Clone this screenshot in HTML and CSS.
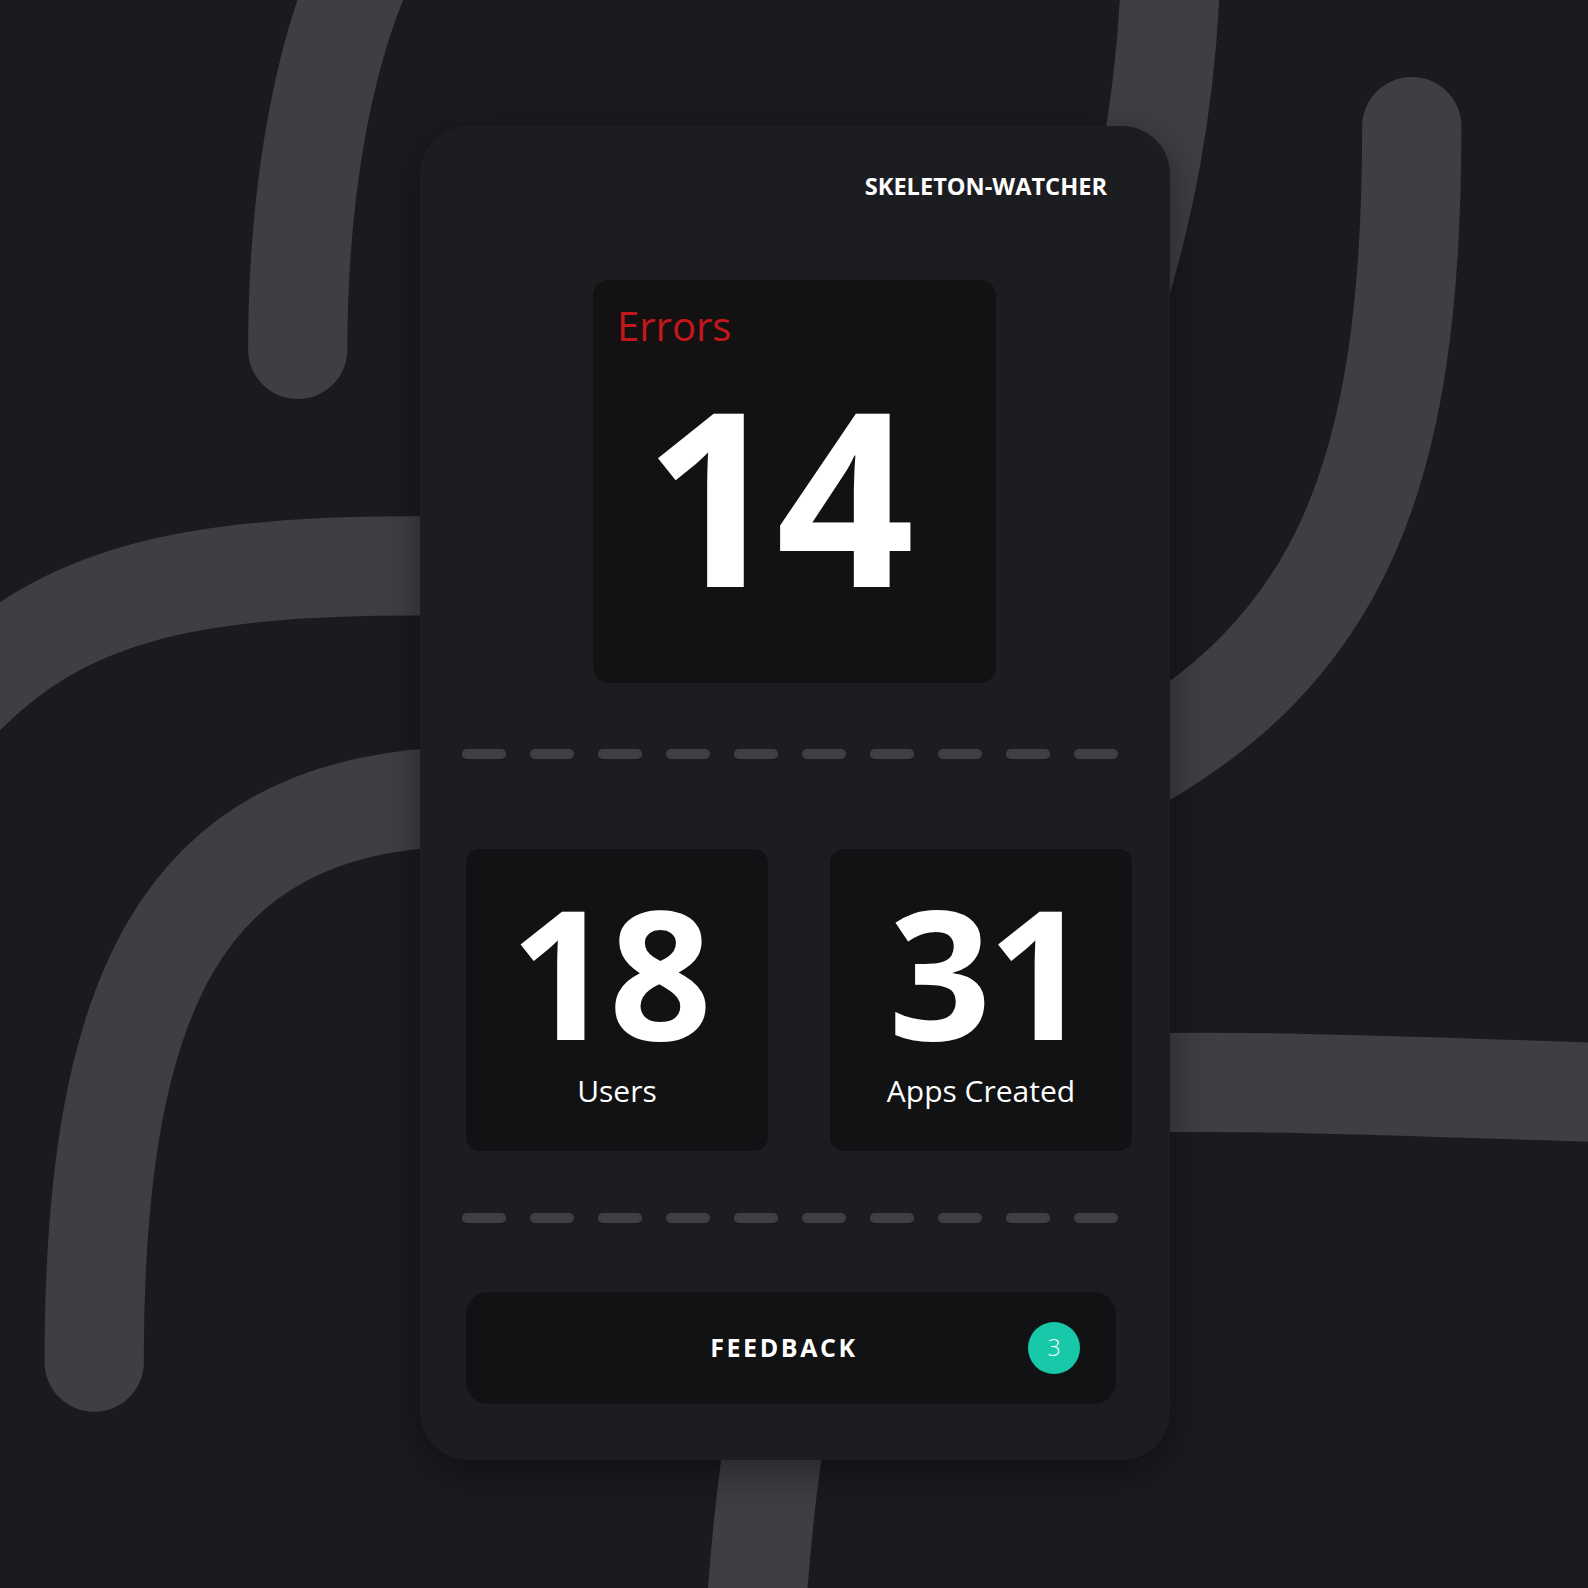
FILE: index.html
```html
<!DOCTYPE html>
<html lang="en">
<head>
    <meta charset="UTF-8">
    <meta name="viewport" content="width=device-width, initial-scale=1.0">
    <title>Skeleton Watcher</title>
    <link rel="stylesheet" href="styles.css">
</head>
<body>
    <!-- decorative strokes behind the phone card -->
    <svg class="backdrop" viewBox="0 0 1568 1568" aria-hidden="true">
        <g fill="none" stroke="#3e3f44" stroke-width="98" stroke-linecap="round">
            <path d="M362 -40 C316 60 294 200 294 345" />
            <path d="M1156 -30 C1152 100 1130 215 1090 335 L1000 520" />
            <path d="M1394 125 C1394 470 1325 645 1100 765" />
            <path d="M-40 692 C60 588 180 556 440 559" />
            <path d="M93 1345 C93 980 180 800 440 787" />
            <path d="M1100 1070 C1250 1066 1400 1073 1620 1080" />
            <path d="M770 1380 C760 1450 750 1520 745 1620" />
        </g>
    </svg>

    <main class="card">
        <div class="app-name">SKELETON-WATCHER</div>

        <section class="errors">
            <div class="errors-label">Errors</div>
            <div class="errors-count">14</div>
        </section>

        <div class="dashes">
            <span></span><span></span><span></span><span></span><span></span>
            <span></span><span></span><span></span><span></span><span></span>
        </div>

        <section class="stats">
            <div class="stat">
                <div class="stat-value users">18</div>
                <div class="stat-label">Users</div>
            </div>
            <div class="stat">
                <div class="stat-value apps">31</div>
                <div class="stat-label">Apps Created</div>
            </div>
        </section>

        <div class="dashes dashes-bottom">
            <span></span><span></span><span></span><span></span><span></span>
            <span></span><span></span><span></span><span></span><span></span>
        </div>

        <button class="feedback">
            FEEDBACK
            <span class="badge">3</span>
        </button>
    </main>
</body>
</html>
```

FILE: styles.css
```css
html, body {
    margin: 0;
    height: 1588px;
    overflow: hidden;
}

body {
    position: relative;
    background-color: #1a1b1f;
    font-family: "Open Sans", "Noto Sans", sans-serif;
    color: #fff;
}

.backdrop {
    position: absolute;
    top: 0;
    left: 0;
    width: 1588px;
    height: 1588px;
}

.card {
    position: relative;
    box-sizing: border-box;
    width: 750px;
    height: 1334px;
    margin: 126px 0 0 420px;
    padding: 49px 0 0 46px;
    display: flex;
    flex-direction: column;
    align-items: flex-start;
    background-color: #1c1d21;
    border-radius: 48px;
    box-shadow: 0 12px 40px rgba(0, 0, 0, 0.4);
}

.app-name {
    align-self: stretch;
    padding-right: 63px;
    text-align: right;
    font-size: 23.6px;
    font-weight: 700;
    line-height: 1;
}

.errors {
    box-sizing: border-box;
    width: 403px;
    height: 403px;
    margin: 81px 0 0 127px;
    padding: 26px 24px 0;
    background-color: #131112;
    border-radius: 16px;
}

.errors-label {
    color: #c3171c;
    font-size: 40px;
    line-height: 1;
}

.errors-count {
    margin-top: 26px;
    padding-right: 37px;
    text-align: center;
    font-size: 242px;
    font-weight: 700;
    letter-spacing: -6px;
    line-height: 1;
}

.dashes {
    display: flex;
    gap: 24px;
    margin: 66px 0 0 -4.5px;
}

.dashes span {
    width: 44px;
    height: 10px;
    border-radius: 5px;
    background-color: #3f4045;
}

.dashes-bottom {
    margin-top: 62px;
}

.stats {
    display: grid;
    grid-template-columns: 302px 302px;
    gap: 62px;
    margin-top: 90px;
}

.stat {
    box-sizing: border-box;
    height: 302px;
    padding-top: 32px;
    text-align: center;
    background-color: #111214;
    border-radius: 14px;
}

.stat-value {
    font-size: 180px;
    font-weight: 700;
    letter-spacing: -4px;
    line-height: 1;
}

/* the "1" glyph sits off-centre, nudge each number so the ink looks centred */
.stat-value.users {
    padding-right: 16px;
}

.stat-value.apps {
    padding-left: 13px;
}

.stat-label {
    margin-top: 15px;
    font-size: 30px;
    line-height: 1;
}

.feedback {
    position: relative;
    width: 650px;
    height: 112px;
    margin-top: 69px;
    padding: 0 14px 0 0;
    border: none;
    border-radius: 22px;
    background-color: #111214;
    color: #fff;
    font-family: inherit;
    font-size: 25px;
    font-weight: 700;
    letter-spacing: 2.6px;
    line-height: 1;
}

.badge {
    position: absolute;
    top: 30px;
    right: 36px;
    width: 52px;
    height: 52px;
    display: flex;
    align-items: center;
    justify-content: center;
    border-radius: 50%;
    background-color: #17c8a9;
    font-size: 23px;
    font-weight: 300;
    letter-spacing: 0;
}
```
